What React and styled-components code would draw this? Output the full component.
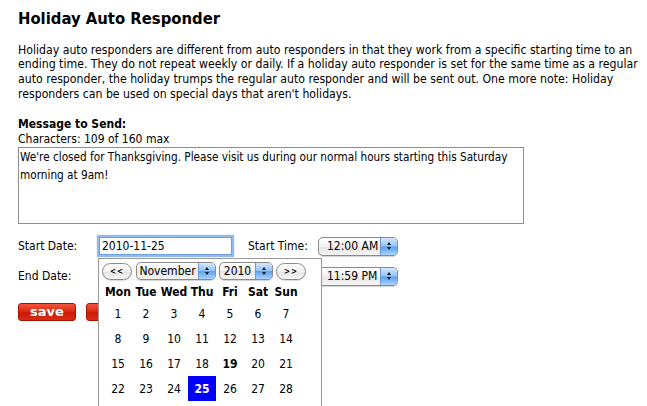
import React from 'react';
import styled, { createGlobalStyle } from 'styled-components';

const GlobalStyle = createGlobalStyle`
  html, body {
    margin: 0;
    padding: 0;
    background: #fff;
  }
  html, body, #root {
    min-height: 100vh;
  }
  body {
    font-family: "DejaVu Sans Condensed", "DejaVu Sans", sans-serif;
    font-size: 12px;
    color: #000;
  }
`;

const Page = styled.div`
  box-sizing: border-box;
  height: 100vh;
  overflow: hidden;
  padding: 9px 18px 0 18px;
`;

const Title = styled.h1`
  margin: 0;
  font-size: 16.5px;
  line-height: 20px;
  font-weight: bold;
`;

const Intro = styled.p`
  margin: 13.6px 0 0 0;
  font-size: 12.2px;
  line-height: 14.8px;
  white-space: nowrap;
`;

const FieldLabel = styled.div`
  font-weight: bold;
  line-height: 15px;
  margin-top: 15.7px;
`;

const Counter = styled.div`
  line-height: 15px;
`;

const MessageBox = styled.textarea`
  display: block;
  box-sizing: border-box;
  width: 506px;
  height: 77px;
  margin: 0;
  padding: 0 1px;
  border: 1px solid #8e8e8e;
  font-family: "DejaVu Sans Condensed", "DejaVu Sans", sans-serif;
  font-size: 11.7px;
  line-height: 18px;
  resize: none;
  outline: none;
  color: #000;
`;

const Form = styled.div`
  display: flex;
  flex-direction: column;
  gap: 10px;
  margin-top: 12px;
`;

const Row = styled.div`
  display: flex;
  align-items: center;
  height: 20px;
`;

const RowLabel = styled.label`
  width: ${p => p.$w}px;
  flex: none;
`;

const DateWrap = styled.div`
  position: relative;
  width: 133px;
  height: 18px;
  margin-right: 16px;
  flex: none;
  z-index: ${p => (p.$open ? 5 : 1)};
`;

const DateInput = styled.input`
  box-sizing: border-box;
  width: 133px;
  height: 18px;
  margin: 0;
  padding: 0 2px;
  border: 1px solid ${p => (p.$focused ? '#6f9fd8' : '#8e8e8e')};
  box-shadow: ${p => (p.$focused ? '0 0 1px 2px rgba(109, 163, 230, 0.75)' : 'none')};
  font-family: "DejaVu Sans Condensed", "DejaVu Sans", sans-serif;
  font-size: 12px;
  color: #000;
  outline: none;
`;

const Select = styled.div`
  display: inline-flex;
  box-sizing: border-box;
  width: ${p => p.$w}px;
  height: ${p => p.$h || 19}px;
  border: 1px solid #8a8a8a;
  border-radius: 5px;
  overflow: hidden;
  background: linear-gradient(#ffffff, #f3f3f3 50%, #e6e6e6 52%, #f6f6f6);
  box-shadow: 0 1px 1px rgba(0, 0, 0, 0.18);
  font-size: ${p => p.$fs || 12}px;
  flex: none;
`;

const SelectText = styled.span`
  flex: 1;
  display: flex;
  align-items: center;
  justify-content: ${p => (p.$center ? 'center' : 'flex-start')};
  padding-left: ${p => (p.$center ? 0 : 8)}px;
  white-space: nowrap;
`;

const SelectCap = styled.span`
  width: 16px;
  flex: none;
  display: flex;
  flex-direction: column;
  align-items: center;
  justify-content: center;
  gap: 2px;
  border-left: 1px solid #6f97cc;
  background: linear-gradient(#d4e8fd, #94c2f5 48%, #5d9ff0 52%, #a8d4fc);
`;

const Arrow = styled.span`
  width: 0;
  height: 0;
  border-left: 2.5px solid transparent;
  border-right: 2.5px solid transparent;
  ${p => (p.$up ? 'border-bottom: 3px solid #1a1a1a;' : 'border-top: 3px solid #1a1a1a;')}
`;

const Popup = styled.div`
  position: absolute;
  left: -1px;
  top: 21px;
  width: 224px;
  box-sizing: border-box;
  padding: 3px 3px 6px 3px;
  background: #fff;
  border: 1px solid #9a9a9a;
`;

const Nav = styled.div`
  display: flex;
  align-items: center;
  gap: 3px;
  height: 18px;
`;

const PillButton = styled.div`
  box-sizing: border-box;
  width: ${p => p.$w}px;
  height: 17px;
  margin-right: ${p => p.$mr || 0}px;
  border: 1px solid #8a8a8a;
  border-radius: 9px;
  background: linear-gradient(#ffffff, #f2f2f2 50%, #e4e4e4 52%, #f7f7f7);
  box-shadow: 0 1px 1px rgba(0, 0, 0, 0.15);
  display: flex;
  align-items: center;
  justify-content: center;
  font-size: 8px;
  font-weight: bold;
  letter-spacing: 1px;
  flex: none;
`;

const Grid = styled.div`
  display: grid;
  grid-template-columns: repeat(7, 28px);
  grid-template-rows: 18px;
  grid-auto-rows: 25px;
  margin: 3px 0 0 2px;
`;

const DayName = styled.div`
  display: flex;
  align-items: center;
  justify-content: center;
  font-weight: bold;
  font-size: 12px;
`;

const Day = styled.div`
  display: flex;
  align-items: center;
  justify-content: center;
  font-size: 12px;
  font-weight: ${p => (p.$today || p.$selected ? 'bold' : 'normal')};
  background: ${p => (p.$selected ? '#0000ff' : 'transparent')};
  color: ${p => (p.$selected ? '#fff' : '#000')};
`;

const Actions = styled.div`
  display: flex;
  gap: 10px;
  margin-top: 17px;
`;

const RedButton = styled.button`
  box-sizing: border-box;
  width: ${p => p.$w}px;
  height: 18px;
  padding: 0;
  border: 1px solid #a81300;
  border-radius: 3px;
  background: linear-gradient(#f2553f, #de2a14 45%, #cc1a04 55%, #d92c17);
  color: #fff;
  font-family: "DejaVu Sans", sans-serif;
  font-weight: bold;
  font-size: 13px;
  line-height: 16px;
`;

const SelectBox = ({ w, h, fs, center, children }) => (
  <Select $w={w} $h={h} $fs={fs}>
    <SelectText $center={center}>{children}</SelectText>
    <SelectCap>
      <Arrow $up />
      <Arrow />
    </SelectCap>
  </Select>
);

const dayNames = ['Mon', 'Tue', 'Wed', 'Thu', 'Fri', 'Sat', 'Sun'];

const Calendar = () => {
  const days = Array.from({ length: 30 }, (_, i) => i + 1);
  return (
    <Popup>
      <Nav>
        <PillButton $w={30} $mr={1}>&lt;&lt;</PillButton>
        <SelectBox w={80} h={18} center>November</SelectBox>
        <SelectBox w={54} h={18} center>2010</SelectBox>
        <PillButton $w={30}>&gt;&gt;</PillButton>
      </Nav>
      <Grid>
        {dayNames.map(d => (
          <DayName key={d}>{d}</DayName>
        ))}
        {days.map(d => (
          <Day key={d} $today={d === 19} $selected={d === 25}>
            {d}
          </Day>
        ))}
      </Grid>
    </Popup>
  );
};

export default function App() {
  return (
    <Page>
      <GlobalStyle />
      <Title>Holiday Auto Responder</Title>
      <Intro>
        Holiday auto responders are different from auto responders in that they work from a specific starting time to an
        <br />
        ending time. They do not repeat weekly or daily. If a holiday auto responder is set for the same time as a regular
        <br />
        auto responder, the holiday trumps the regular auto responder and will be sent out. One more note: Holiday
        <br />
        responders can be used on special days that aren't holidays.
      </Intro>
      <FieldLabel>Message to Send:</FieldLabel>
      <Counter>Characters: 109 of 160 max</Counter>
      <MessageBox defaultValue="We're closed for Thanksgiving. Please visit us during our normal hours starting this Saturday morning at 9am!" />
      <Form>
        <Row>
          <RowLabel $w={81}>Start Date:</RowLabel>
          <DateWrap $open>
            <DateInput $focused defaultValue="2010-11-25" />
            <Calendar />
          </DateWrap>
          <RowLabel $w={70}>Start Time:</RowLabel>
          <SelectBox w={80}>12:00 AM</SelectBox>
        </Row>
        <Row>
          <RowLabel $w={81}>End Date:</RowLabel>
          <DateWrap>
            <DateInput defaultValue="2010-11-25" />
          </DateWrap>
          <RowLabel $w={70}>End Time:</RowLabel>
          <SelectBox w={80}>11:59 PM</SelectBox>
        </Row>
      </Form>
      <Actions>
        <RedButton $w={58}>save</RedButton>
        <RedButton $w={70}>cancel</RedButton>
      </Actions>
    </Page>
  );
}
